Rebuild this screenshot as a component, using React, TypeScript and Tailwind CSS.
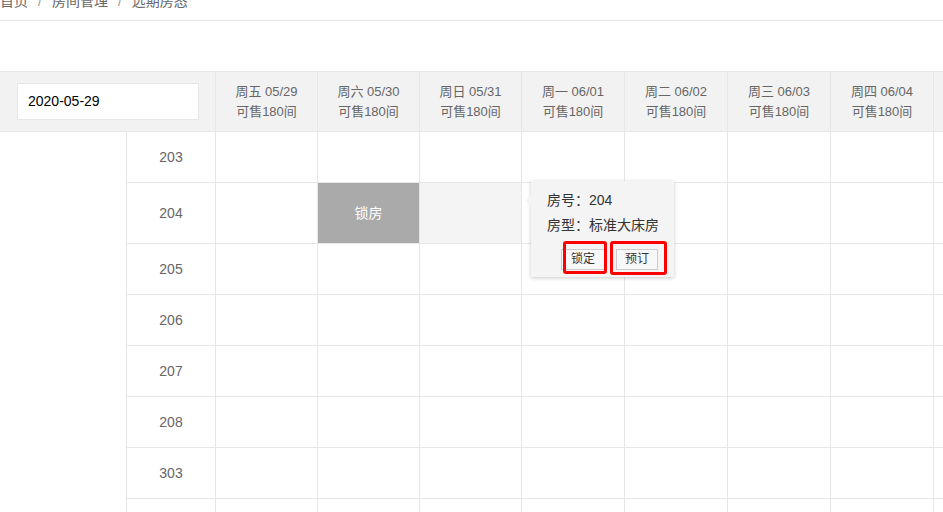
import React from "react";

// 远期房态 - room status calendar

const DAYS = ["周五 05/29", "周六 05/30", "周日 05/31", "周一 06/01", "周二 06/02", "周三 06/03", "周四 06/04", ""];

const ROOMS = ["203", "204", "205", "206", "207", "208", "303", "304"];

const FONT = "font-['Liberation_Sans','Noto_Sans_CJK_SC',sans-serif]";

function Header() {
  return (
    <div className="grid h-[61px] grid-cols-[215px_102px_102px_102px_103px_103px_103px_103px_1fr] border-y border-[#e6e6e6] bg-[#f2f2f2]">
      <div className="flex items-center pl-[17px]">
        <div className="flex h-[37px] w-[182px] items-center border border-[#e6e6e6] bg-white pl-[10px] text-[14px] text-black">
          2020-05-29
        </div>
      </div>
      {DAYS.map((d, i) => (
        <div key={i} className="flex flex-col items-center justify-center overflow-hidden whitespace-nowrap border-l border-[#e6e6e6] text-[13px] leading-[20px] text-[#666]">
          {d && (
            <>
              <span>{d}</span>
              <span>可售180间</span>
            </>
          )}
        </div>
      ))}
    </div>
  );
}

function RoomRow({ room }: { room: string }) {
  const tall = room === "204";
  return (
    <div
      className={
        "grid grid-cols-[89px_102px_102px_102px_103px_103px_103px_103px_1fr] " +
        (tall ? "h-[61px]" : "h-[51px]")
      }
    >
      <div className="flex items-center justify-center border-b border-l border-[#e6e6e6] text-[14px] text-[#666]">
        {room}
      </div>
      {DAYS.map((_, i) => {
        if (tall && i === 1) {
          return (
            <div key={i} className="flex items-center justify-center border-b border-l border-[#e6e6e6] bg-[#aaaaaa] text-[14px] text-white">
              锁房
            </div>
          );
        }
        return (
          <div
            key={i}
            className={
              "border-b border-l border-[#e6e6e6] " + (tall && i === 2 ? "bg-[#f4f4f4]" : "bg-white")
            }
          />
        );
      })}
    </div>
  );
}

function RoomTip() {
  return (
    <div className="absolute left-[531px] top-[181px] h-[96px] w-[143px] bg-[#f4f4f4] shadow-[0_1px_4px_rgba(0,0,0,0.22)]">
      <div className="absolute -left-[6px] top-[14px] h-0 w-0 border-y-[6px] border-r-[6px] border-y-transparent border-r-[#f4f4f4]" />
      <div className="pl-[16px] pt-[9px] text-[14px] leading-[20px] text-[#333]">
        <div>房号：204</div>
        <div className="mt-[5px]">房型：标准大床房</div>
      </div>
      <div className="mt-[14px] flex justify-end gap-[11px] pr-[16px]">
        <button className="h-[21px] w-[44px] border border-[#cccccc] bg-[#f8f8f8] text-[12px] leading-[19px] text-[#333]">锁定</button>
        <button className="h-[21px] w-[42px] border border-[#cccccc] bg-[#f8f8f8] text-[12px] leading-[19px] text-[#333]">预订</button>
      </div>
      {/* highlight marks */}
      <div className="absolute left-[32px] top-[60px] h-[33px] w-[44px] rounded-[3px] border-[3px] border-[#ff0000]" />
      <div className="absolute left-[79px] top-[60px] h-[34px] w-[57px] rounded-[3px] border-[3px] border-[#ff0000]" />
    </div>
  );
}

export default function App() {
  return (
    <div className={"relative h-[512px] w-[943px] overflow-hidden bg-white " + FONT}>
      <div className="h-[21px] overflow-hidden border-b border-[#e6e6e6]">
        <div className="-mt-[9px] flex items-center whitespace-nowrap text-[14px] leading-[20px] text-[#666]">
          <span>首页</span>
          <span className="mx-[10px] text-[#999]">/</span>
          <span>房间管理</span>
          <span className="mx-[10px] text-[#999]">/</span>
          <span>远期房态</span>
        </div>
      </div>
      <div className="h-[50px]" />
      <Header />
      <div className="flex">
        <div className="w-[126px] shrink-0" />
        <div className="flex-1">
          {ROOMS.map((r) => (
            <RoomRow key={r} room={r} />
          ))}
        </div>
      </div>
      <RoomTip />
    </div>
  );
}
